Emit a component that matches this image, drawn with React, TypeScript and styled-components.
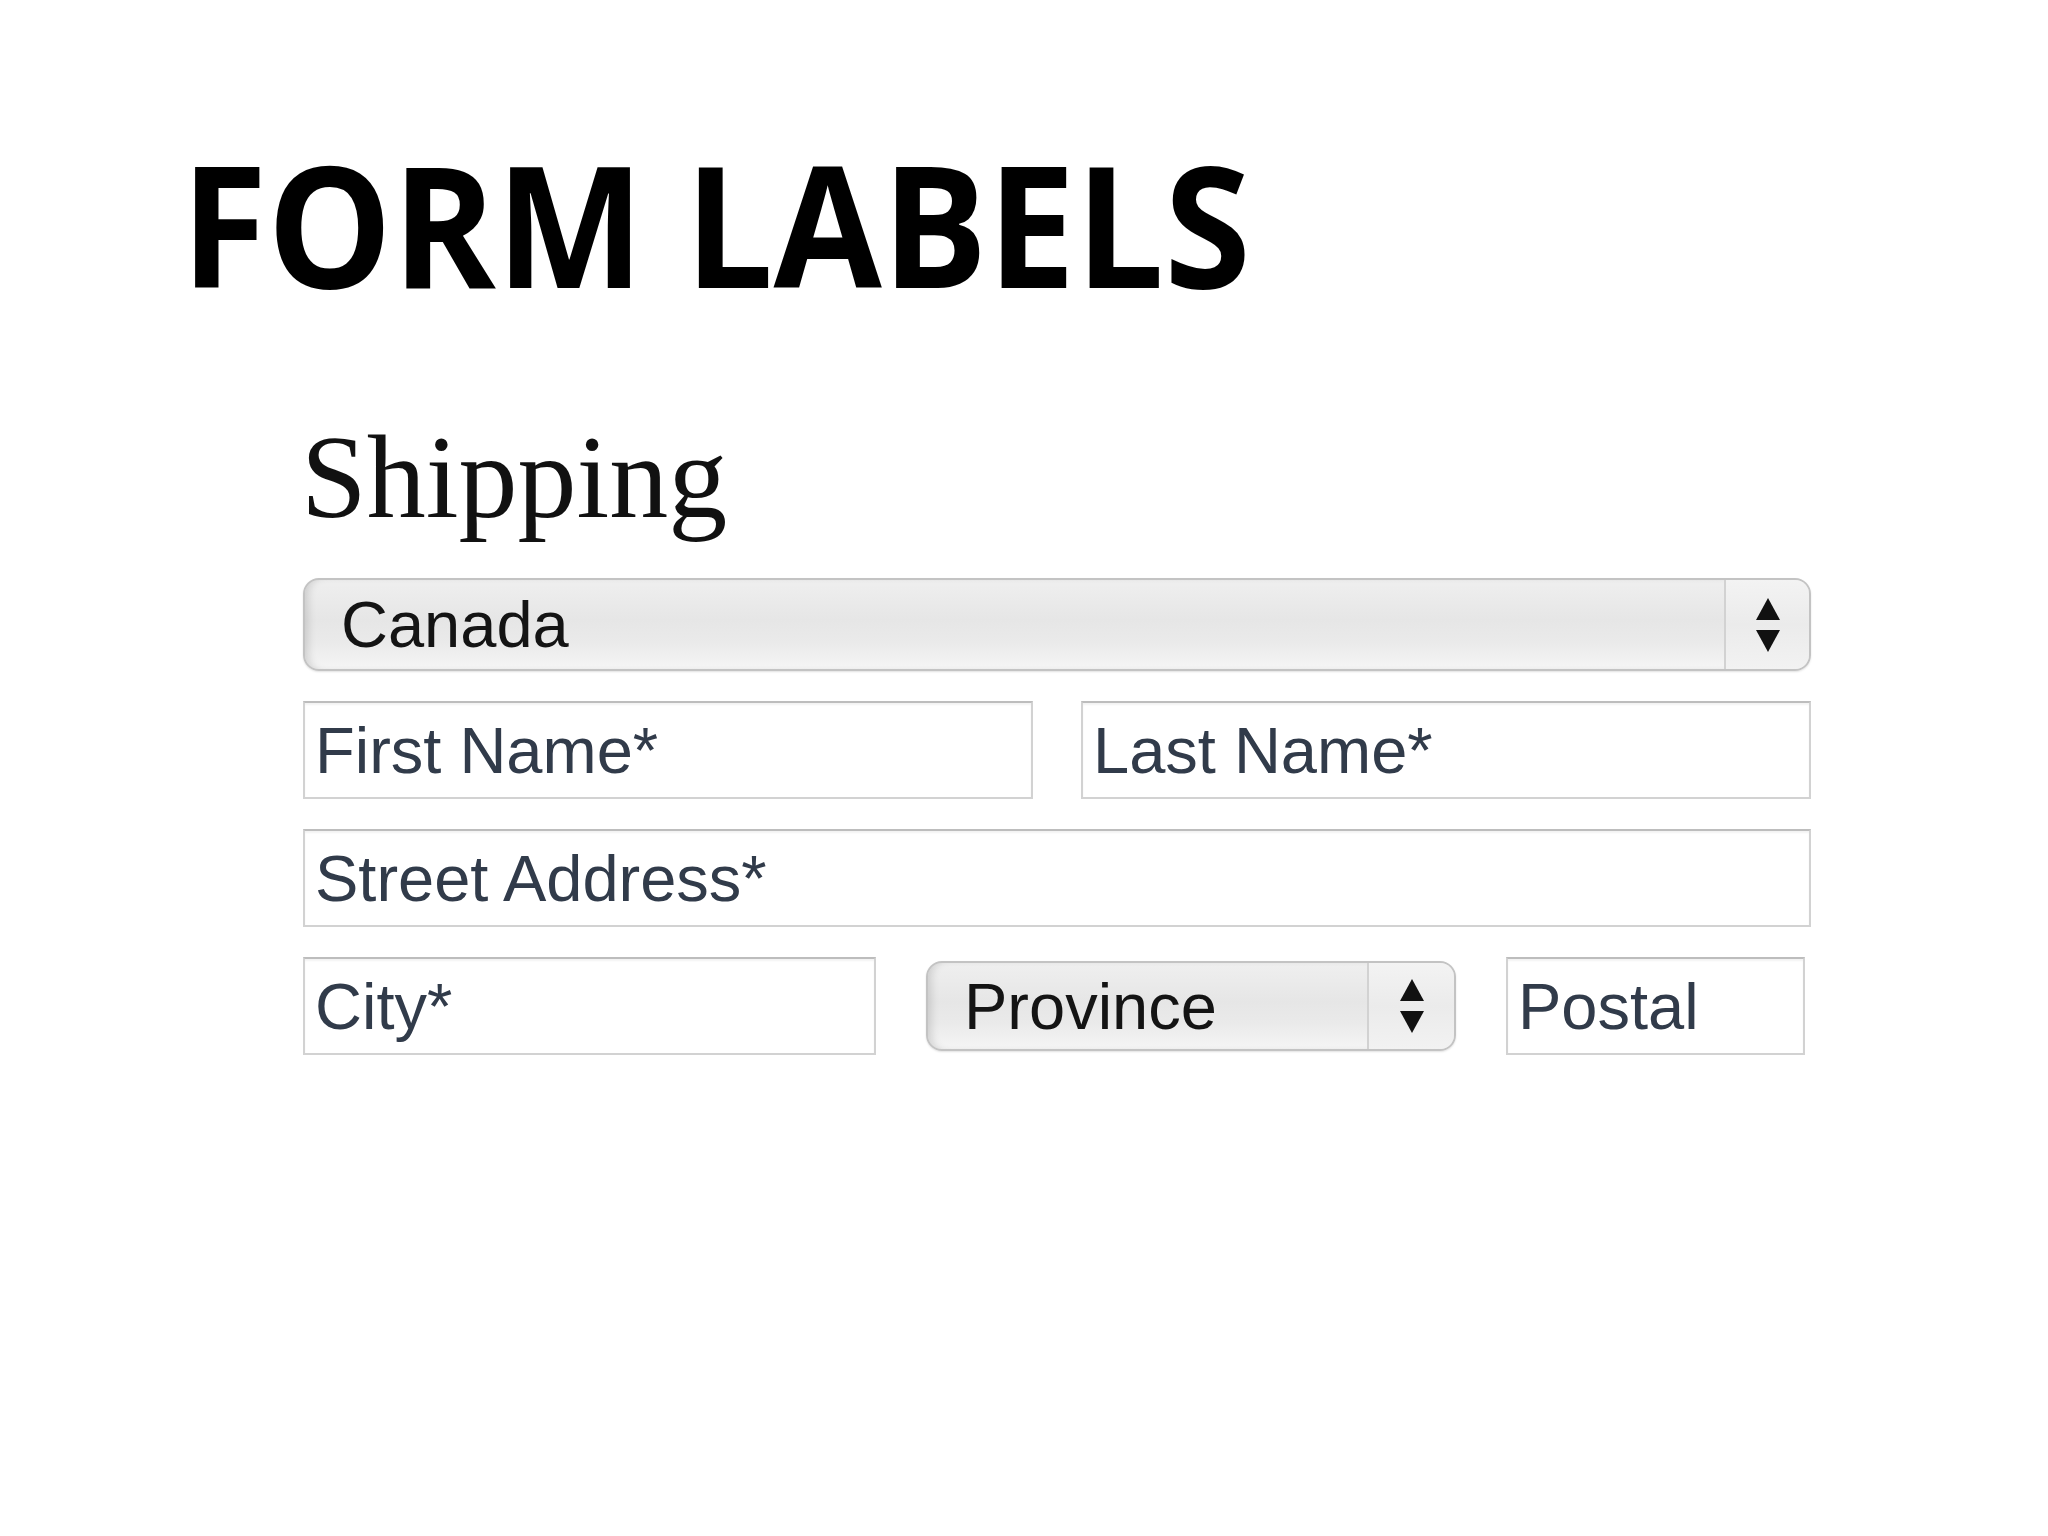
import styled, { createGlobalStyle } from "styled-components";

const INK = "#0b0b0b";
const FIELD_TEXT = "#313b4a";

const GlobalStyle = createGlobalStyle`
  html,
  body {
    margin: 0;
    padding: 0;
    background: #ffffff;
  }

  * {
    box-sizing: border-box;
  }
`;

const Slide = styled.main`
  min-height: 100vh;
  background: #ffffff;
  color: ${INK};
  padding: 139px 0 0 181px;
`;

// Calibri-like slide heading: Open Sans squeezed a little
const Title = styled.h1`
  display: inline-block;
  margin: 0;
  font: 700 168px/1 "Open Sans", "Liberation Sans", sans-serif;
  letter-spacing: 0;
  color: #000;
  transform: scaleX(0.935);
  transform-origin: left center;
`;

const Panel = styled.section`
  width: 1508px;
  margin: 112px 0 0 122px;
  display: flex;
  flex-direction: column;
  gap: 30px;
`;

const Heading = styled.h2`
  margin: 0 0 11px -2px;
  font: 400 118px/1 "Liberation Serif", "Times New Roman", serif;
  color: #111;
`;

const Row = styled.div<{ $columns: string; $gap: number }>`
  display: grid;
  grid-template-columns: ${({ $columns }) => $columns};
  column-gap: ${({ $gap }) => `${$gap}px`};
  align-items: center;
`;

const TextField = styled.input`
  width: 100%;
  height: 98px;
  padding: 0 0 0 10px;
  border: 2px solid #d2d2d2;
  border-top-color: #bdbdbd;
  border-radius: 0;
  background: #fff;
  box-shadow: inset 0 2px 2px rgba(0, 0, 0, 0.05);
  font: 400 65px/1 "Liberation Sans", Arial, sans-serif;
  color: ${FIELD_TEXT};
  outline: none;

  &::placeholder {
    color: ${FIELD_TEXT};
    opacity: 1;
  }
`;

const SelectBox = styled.label<{ $height: number }>`
  display: flex;
  align-items: stretch;
  height: ${({ $height }) => `${$height}px`};
  border: 2px solid #c3c3c3;
  border-radius: 16px;
  background: linear-gradient(to bottom, #efefef 0%, #e6e6e6 45%, #eaeaea 70%, #f5f5f5 100%);
  box-shadow:
    inset 8px 0 8px -5px rgba(0, 0, 0, 0.14),
    inset -8px 0 8px -5px rgba(0, 0, 0, 0.12),
    0 1px 2px rgba(0, 0, 0, 0.12);
  overflow: hidden;
`;

const SelectValue = styled.select`
  flex: 1;
  min-width: 0;
  appearance: none;
  border: 0;
  background: transparent;
  padding: 0 0 0 36px;
  font: 400 65px/1 "Liberation Sans", Arial, sans-serif;
  color: #141414;
  outline: none;
`;

const ArrowCell = styled.span<{ $width: number }>`
  flex: 0 0 ${({ $width }) => `${$width}px`};
  display: grid;
  place-items: center;
  border-left: 2px solid #d2d2d2;
  background: linear-gradient(to bottom, #f3f3f3, #ebebeb 50%, #f2f2f2);
`;

function StepperArrows() {
  return (
    <svg width="26" height="56" viewBox="0 0 26 56" aria-hidden="true">
      <path d="M13 1 L25 23 L1 23 Z" fill="#111" />
      <path d="M1 33 L25 33 L13 55 Z" fill="#111" />
    </svg>
  );
}

function Dropdown({ value, height, arrowWidth }: { value: string; height: number; arrowWidth: number }) {
  return (
    <SelectBox $height={height}>
      <SelectValue defaultValue={value}>
        <option>{value}</option>
      </SelectValue>
      <ArrowCell $width={arrowWidth}>
        <StepperArrows />
      </ArrowCell>
    </SelectBox>
  );
}

export default function App() {
  return (
    <>
      <GlobalStyle />
      <Slide>
        <Title>FORM LABELS</Title>
        <Panel>
          <Heading>Shipping</Heading>
          <Dropdown value="Canada" height={93} arrowWidth={85} />
          <Row $columns="1fr 1fr" $gap={48}>
            <TextField placeholder="First Name*" />
            <TextField placeholder="Last Name*" />
          </Row>
          <TextField placeholder="Street Address*" />
          <Row $columns="573px 530px 299px" $gap={50}>
            <TextField placeholder="City*" />
            <Dropdown value="Province" height={90} arrowWidth={87} />
            <TextField placeholder="Postal" />
          </Row>
        </Panel>
      </Slide>
    </>
  );
}
